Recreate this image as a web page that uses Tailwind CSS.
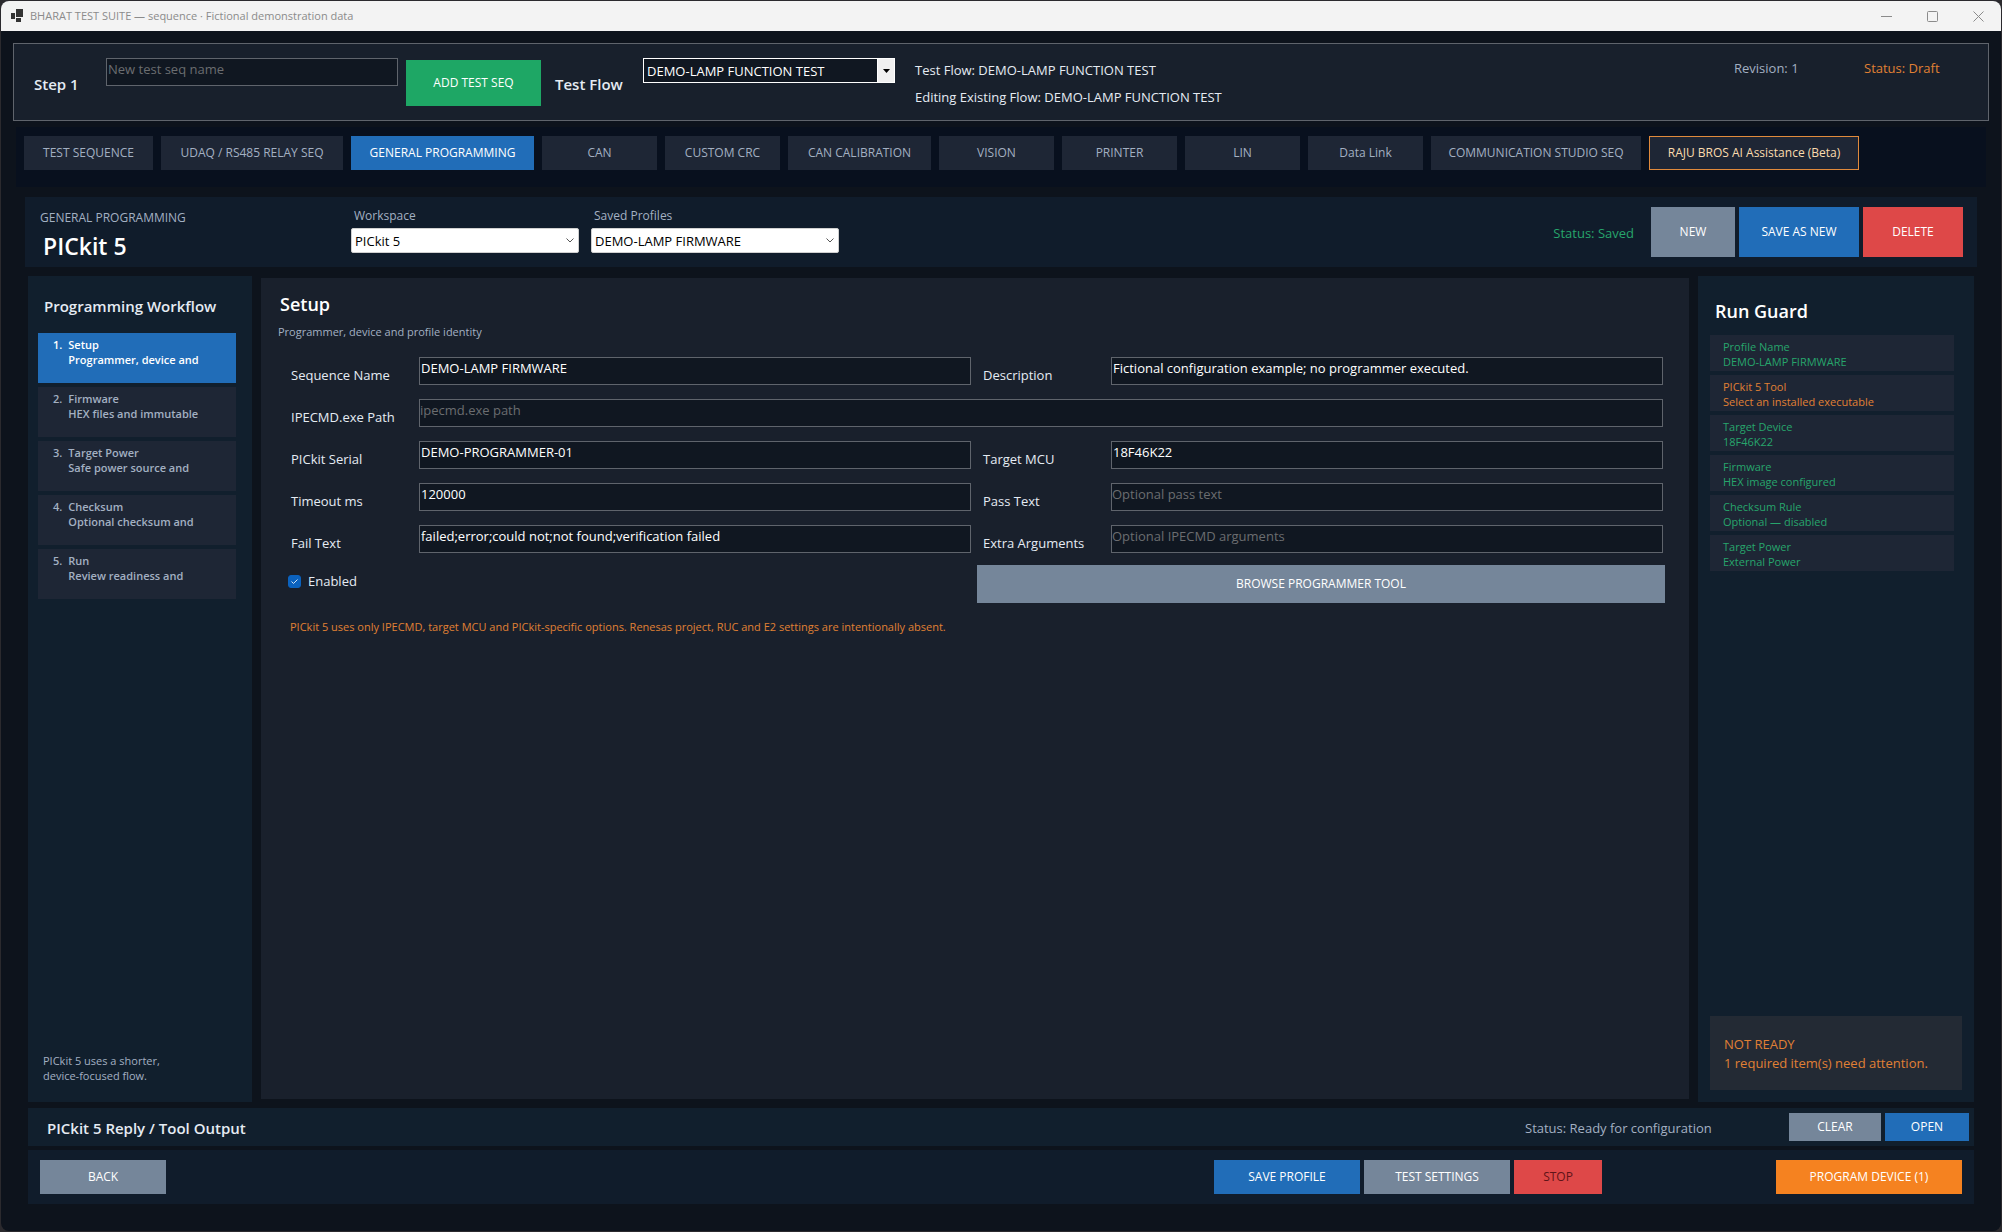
<!DOCTYPE html>
<html lang="en">
<head>
  <meta charset="utf-8"/>
  <meta content="width=device-width, initial-scale=1" name="viewport"/>
  <title>BHARAT TEST SUITE — sequence</title>
  <script src="https://cdn.jsdelivr.net/npm/@tailwindcss/browser@4"></script>
  <style>
    body {
      font-family: "Open Sans", "Noto Sans", sans-serif;
    }
  </style>
</head>
<body class="bg-[#2b2a2e] text-[13px] leading-[18px] text-[#e5ebf3]">
  <div class="min-h-screen flex flex-col p-px">
    <div class="flex-1 flex flex-col bg-[#0d131c] rounded-lg overflow-hidden">

      <!-- Title bar -->
      <header class="h-[30px] shrink-0 flex items-center bg-[#f3f3f3] text-[#8b8b8b] pl-[10px]">
        <svg class="w-3 h-[14px] mr-[7px]" viewBox="0 0 12 14" fill="#333">
          <rect x="5" y="0" width="7" height="8"/>
          <rect x="0" y="4" width="4" height="6"/>
          <rect x="5" y="9" width="5" height="4"/>
        </svg>
        <h1 class="flex-1 text-[11px]">BHARAT TEST SUITE — sequence · Fictional demonstration data</h1>
        <button aria-label="Minimize" class="w-[46px] h-full flex items-center justify-center">
          <svg class="w-[11px] h-[11px]" viewBox="0 0 11 11" fill="none" stroke="#8b8b8b"><path d="M0 5.500h11"/></svg>
        </button>
        <button aria-label="Maximize" class="w-[46px] h-full flex items-center justify-center">
          <svg class="w-[11px] h-[11px]" viewBox="0 0 11 11" fill="none" stroke="#8b8b8b"><rect x=".5" y=".5" width="10" height="10" rx="1"/></svg>
        </button>
        <button aria-label="Close" class="w-[46px] h-full flex items-center justify-center">
          <svg class="w-[11px] h-[11px]" viewBox="0 0 11 11" fill="none" stroke="#8b8b8b"><path d="M.5.5l10 10M10.5.5l-10 10"/></svg>
        </button>
      </header>

      <!-- Step / flow selection -->
      <section class="mt-3 mx-3 h-[78px] shrink-0 flex items-start border border-[#5f646c] bg-[#18202c] pl-5 pt-[14px]">
        <label for="seq-name" class="w-[72px] mt-[17px] text-[15px] font-semibold">Step 1</label>
        <input id="seq-name" type="text" placeholder="New test seq name" class="w-[292px] h-7 border border-[#5f646c] bg-[#101721] px-px pb-[6px] text-[13px] placeholder:text-[#6b6d70]"/>
        <button class="ml-2 mt-[2px] w-[135px] h-[46px] bg-[#1ea765] text-white text-[12px] font-medium">ADD TEST SEQ</button>
        <label for="flow" class="ml-[14px] w-[88px] mt-[17px] text-[15px] font-semibold">Test Flow</label>
        <div class="relative w-[252px]">
          <select id="flow" class="block appearance-none w-full h-[25px] border border-white bg-[#101721] pl-[3px] text-[13px] text-white">
            <option>DEMO-LAMP FUNCTION TEST</option>
          </select>
          <span class="pointer-events-none absolute inset-y-0 right-0 w-[18px] bg-[#f0f0f0] border border-white flex items-center justify-center">
            <svg class="w-[7px] h-1" viewBox="0 0 7 4"><path d="M0 0h7L3.500 4z" fill="#000"/></svg>
          </span>
        </div>
        <div class="ml-5 mt-[3px] flex-1">
          <p>Test Flow: DEMO-LAMP FUNCTION TEST</p>
          <p class="mt-[9px]">Editing Existing Flow: DEMO-LAMP FUNCTION TEST</p>
        </div>
        <p class="w-[130px] mt-px text-[#a3b0c2]">Revision: 1</p>
        <p class="w-[124px] mt-px text-[#e08034]">Status: Draft</p>
      </section>

      <!-- Tabs -->
      <nav class="mt-[6px] mx-[15px] h-[60px] shrink-0 flex gap-2 bg-[#08101e] pl-2 pt-[9px] text-[12px] leading-4 font-medium text-[#a3b0c2]">
        <button class="w-[129px] h-[34px] bg-[#1e2635]">TEST SEQUENCE</button>
        <button class="w-[182px] h-[34px] bg-[#1e2635]">UDAQ / RS485 RELAY SEQ</button>
        <button class="w-[183px] h-[34px] bg-[#216db8] text-white">GENERAL PROGRAMMING</button>
        <button class="w-[115px] h-[34px] bg-[#1e2635]">CAN</button>
        <button class="w-[115px] h-[34px] bg-[#1e2635]">CUSTOM CRC</button>
        <button class="w-[143px] h-[34px] bg-[#1e2635]">CAN CALIBRATION</button>
        <button class="w-[115px] h-[34px] bg-[#1e2635]">VISION</button>
        <button class="w-[115px] h-[34px] bg-[#1e2635]">PRINTER</button>
        <button class="w-[115px] h-[34px] bg-[#1e2635]">LIN</button>
        <button class="w-[115px] h-[34px] bg-[#1e2635]">Data Link</button>
        <button class="w-[210px] h-[34px] bg-[#1e2635]">COMMUNICATION STUDIO SEQ</button>
        <button class="w-[210px] h-[34px] bg-[#1e2635] border border-[#e08a3c] text-[#fbdcae]">RAJU BROS AI Assistance (Beta)</button>
      </nav>

      <!-- Workspace bar -->
      <section class="mt-[10px] mx-6 h-[70px] shrink-0 flex bg-[#101c2b]">
        <div class="w-[326px] pl-[15px] pt-3">
          <p class="text-[12px] text-[#a3b0c2]">GENERAL PROGRAMMING</p>
          <h2 class="mt-[3px] pl-[3px] text-[23px] leading-8 font-semibold text-white">PICkit 5</h2>
        </div>
        <div class="w-[228px] pt-[10px]">
          <label for="workspace" class="block pl-[3px] text-[12px] text-[#a3b0c2]">Workspace</label>
          <div class="relative mt-[3px]">
            <select id="workspace" class="block appearance-none w-full h-[25px] rounded-xs border border-[#d0d0d0] bg-white pl-[3px] text-[13px] text-black">
              <option>PICkit 5</option>
            </select>
            <svg class="pointer-events-none absolute right-[5px] top-[10px] w-2 h-[5px]" viewBox="0 0 8 5" fill="none" stroke="#555"><path d="M.5.5L4 4 7.500.5"/></svg>
          </div>
        </div>
        <div class="ml-3 w-[248px] pt-[10px]">
          <label for="profiles" class="block pl-[3px] text-[12px] text-[#a3b0c2]">Saved Profiles</label>
          <div class="relative mt-[3px]">
            <select id="profiles" class="block appearance-none w-full h-[25px] rounded-xs border border-[#d0d0d0] bg-white pl-[3px] text-[13px] text-black">
              <option>DEMO-LAMP FIRMWARE</option>
            </select>
            <svg class="pointer-events-none absolute right-[5px] top-[10px] w-2 h-[5px]" viewBox="0 0 8 5" fill="none" stroke="#555"><path d="M.5.5L4 4 7.500.5"/></svg>
          </div>
        </div>
        <div class="flex-1 flex items-start justify-end gap-1 pt-[10px] pr-[14px] text-[12px] font-medium text-white">
          <p class="mt-[17px] mr-[13px] text-[13px] font-normal text-[#27a56c]">Status: Saved</p>
          <button class="w-[84px] h-[50px] bg-[#75869a]">NEW</button>
          <button class="w-[120px] h-[50px] bg-[#216db8]">SAVE AS NEW</button>
          <button class="w-[100px] h-[50px] bg-[#de4848]">DELETE</button>
        </div>
      </section>

      <!-- Work area -->
      <div class="mt-[9px] mx-[27px] flex-1 flex">
        <aside class="w-[224px] flex flex-col bg-[#111f2d] px-[10px] pt-5 pb-[19px]">
          <h3 class="pl-[6px] text-[15px] leading-5 font-semibold">Programming Workflow</h3>
          <ol class="mt-[17px] w-[198px] flex flex-col gap-1 text-[11px] leading-[15px] font-semibold text-[#a3b0c2]">
            <li><button class="w-full h-[50px] bg-[#216db8] text-white flex items-start gap-x-[6px] text-left pl-[15px] pt-1"><span>1.</span><span>Setup<br/>Programmer, device and</span></button></li>
            <li><button class="w-full h-[50px] bg-[#1e2635] flex items-start gap-x-[6px] text-left pl-[15px] pt-1"><span>2.</span><span>Firmware<br/>HEX files and immutable</span></button></li>
            <li><button class="w-full h-[50px] bg-[#1e2635] flex items-start gap-x-[6px] text-left pl-[15px] pt-1"><span>3.</span><span>Target Power<br/>Safe power source and</span></button></li>
            <li><button class="w-full h-[50px] bg-[#1e2635] flex items-start gap-x-[6px] text-left pl-[15px] pt-1"><span>4.</span><span>Checksum<br/>Optional checksum and</span></button></li>
            <li><button class="w-full h-[50px] bg-[#1e2635] flex items-start gap-x-[6px] text-left pl-[15px] pt-1"><span>5.</span><span>Run<br/>Review readiness and</span></button></li>
          </ol>
          <p class="mt-auto pl-[5px] text-[11px] leading-[15px] text-[#a3b0c2]">PICkit 5 uses a shorter,<br/>device-focused flow.</p>
        </aside>

        <main class="flex-1 mx-[9px] mt-[2px] mb-[3px] bg-[#19202c] pt-[14px]">
          <h3 class="pl-[19px] text-[18px] leading-6 font-semibold text-white">Setup</h3>
          <p class="mt-[7px] pl-[17px] text-[11px] text-[#a3b0c2]">Programmer, device and profile identity</p>
          <form class="mt-4 pl-7 pr-6" onsubmit="return false">
            <div class="grid grid-cols-[130px_1fr_140px_1fr] gap-y-[14px] pr-[2px]">
              <label for="f-name" class="pl-[2px] pt-[9px]">Sequence Name</label>
              <input id="f-name" type="text" value="DEMO-LAMP FIRMWARE" class="h-7 min-w-0 border border-[#5f646c] bg-[#101721] px-px pb-[6px] text-[13px] text-white"/>
              <label for="f-desc" class="pl-3 pt-[9px]">Description</label>
              <input id="f-desc" type="text" value="Fictional configuration example; no programmer executed." class="h-7 min-w-0 border border-[#5f646c] bg-[#101721] px-px pb-[6px] text-[13px] text-white"/>
              <label for="f-path" class="pl-[2px] pt-[9px]">IPECMD.exe Path</label>
              <input id="f-path" type="text" placeholder="ipecmd.exe path" class="col-span-3 h-7 min-w-0 border border-[#5f646c] bg-[#101721] pb-[6px] text-[13px] placeholder:text-[#6b6d70]"/>
              <label for="f-serial" class="pl-[2px] pt-[9px]">PICkit Serial</label>
              <input id="f-serial" type="text" value="DEMO-PROGRAMMER-01" class="h-7 min-w-0 border border-[#5f646c] bg-[#101721] px-px pb-[6px] text-[13px] text-white"/>
              <label for="f-mcu" class="pl-3 pt-[9px]">Target MCU</label>
              <input id="f-mcu" type="text" value="18F46K22" class="h-7 min-w-0 border border-[#5f646c] bg-[#101721] px-px pb-[6px] text-[13px] text-white"/>
              <label for="f-timeout" class="pl-[2px] pt-[9px]">Timeout ms</label>
              <input id="f-timeout" type="text" value="120000" class="h-7 min-w-0 border border-[#5f646c] bg-[#101721] px-px pb-[6px] text-[13px] text-white"/>
              <label for="f-pass" class="pl-3 pt-[9px]">Pass Text</label>
              <input id="f-pass" type="text" placeholder="Optional pass text" class="h-7 min-w-0 border border-[#5f646c] bg-[#101721] pb-[6px] text-[13px] placeholder:text-[#6b6d70]"/>
              <label for="f-fail" class="pl-[2px] pt-[9px]">Fail Text</label>
              <input id="f-fail" type="text" value="failed;error;could not;not found;verification failed" class="h-7 min-w-0 border border-[#5f646c] bg-[#101721] px-px pb-[6px] text-[13px] text-white"/>
              <label for="f-args" class="pl-3 pt-[9px]">Extra Arguments</label>
              <input id="f-args" type="text" placeholder="Optional IPECMD arguments" class="h-7 min-w-0 border border-[#5f646c] bg-[#101721] pb-[6px] text-[13px] placeholder:text-[#6b6d70]"/>
            </div>
            <div class="mt-3 grid grid-cols-2">
              <label class="flex items-center gap-[7px] self-start mt-[7px]">
                <span class="relative -ml-px w-[13px] h-[13px]">
                  <input type="checkbox" checked class="block appearance-none w-[13px] h-[13px] rounded-[3px] border border-[#8a8f96] checked:border-[#0b62be] checked:bg-[#0b62be]"/>
                  <svg class="pointer-events-none absolute inset-0" viewBox="0 0 13 13" fill="none" stroke="#cfe3f7"><path d="M3.500 6.500l2 2 4-4"/></svg>
                </span>
                Enabled
              </label>
              <button class="h-[38px] bg-[#75869a] text-[12px] font-medium text-white">BROWSE PROGRAMMER TOOL</button>
            </div>
          </form>
          <p class="mt-[15px] pl-[29px] text-[11px] text-[#e08034]">PICkit 5 uses only IPECMD, target MCU and PICkit-specific options. Renesas project, RUC and E2 settings are intentionally absent.</p>
        </main>

        <aside class="w-[276px] flex flex-col bg-[#111f2d] px-3 pt-[23px] pb-3">
          <h3 class="pl-[5px] text-[18px] leading-6 font-semibold text-white">Run Guard</h3>
          <ul class="mt-3 w-[244px] flex flex-col gap-1 text-[11px] leading-[15px] text-[#27a56c]">
            <li class="h-9 bg-[#1e2635] pl-[13px] pt-1">Profile Name<br/>DEMO-LAMP FIRMWARE</li>
            <li class="h-9 bg-[#1e2635] pl-[13px] pt-1 text-[#e08034]">PICkit 5 Tool<br/>Select an installed executable</li>
            <li class="h-9 bg-[#1e2635] pl-[13px] pt-1">Target Device<br/>18F46K22</li>
            <li class="h-9 bg-[#1e2635] pl-[13px] pt-1">Firmware<br/>HEX image configured</li>
            <li class="h-9 bg-[#1e2635] pl-[13px] pt-1">Checksum Rule<br/>Optional — disabled</li>
            <li class="h-9 bg-[#1e2635] pl-[13px] pt-1">Target Power<br/>External Power</li>
          </ul>
          <p class="mt-auto h-[74px] bg-[#232a34] pl-[14px] pt-[19px] leading-[19px] text-[#e08034]">NOT READY<br/>1 required item(s) need attention.</p>
        </aside>
      </div>

      <!-- Tool output -->
      <section class="mt-[6px] mx-[27px] h-[38px] shrink-0 flex items-center gap-1 bg-[#111f2d] pl-[19px] pr-[5px] text-[12px] font-medium text-white">
        <h3 class="flex-1 pt-[2px] text-[15px] font-semibold text-[#e5ebf3]">PICkit 5 Reply / Tool Output</h3>
        <p class="w-[260px] pt-[2px] text-[13px] font-normal text-[#a3b0c2]">Status: Ready for configuration</p>
        <button class="w-[92px] h-7 bg-[#75869a]">CLEAR</button>
        <button class="w-[84px] h-7 bg-[#216db8]">OPEN</button>
      </section>

      <!-- Actions -->
      <footer class="mt-1 mb-[27px] mx-[27px] h-[54px] shrink-0 flex items-center gap-1 bg-[#101c2b] px-3 text-[12px] font-medium text-white">
        <button class="mr-auto w-[126px] h-[34px] bg-[#75869a]">BACK</button>
        <button class="w-[146px] h-[34px] bg-[#216db8]">SAVE PROFILE</button>
        <button class="w-[146px] h-[34px] bg-[#75869a]">TEST SETTINGS</button>
        <button class="w-[88px] h-[34px] bg-[#de4848] text-[#5f1418]">STOP</button>
        <button class="ml-[170px] w-[186px] h-[34px] bg-[#f58220]">PROGRAM DEVICE (1)</button>
      </footer>
    </div>
  </div>
</body>
</html>
